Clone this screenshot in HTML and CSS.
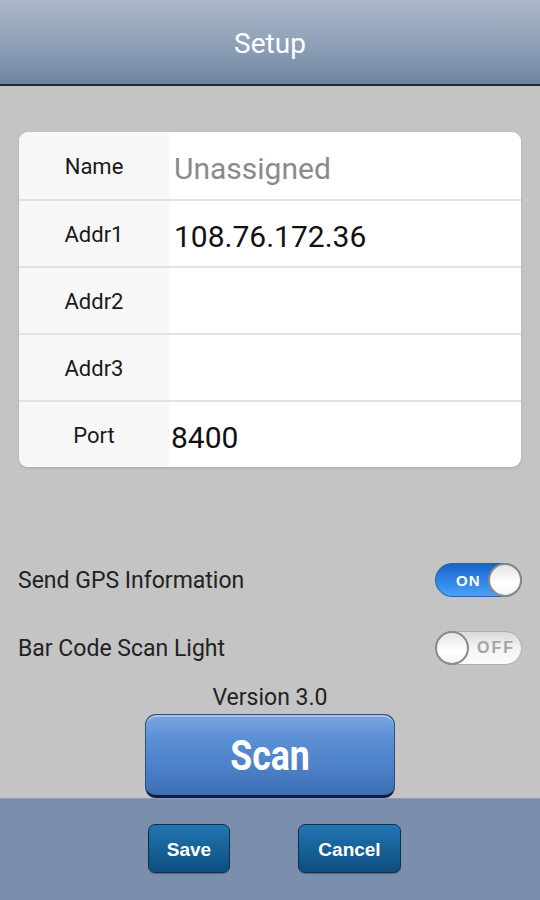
FILE: index.html
```html
<!DOCTYPE html>
<html lang="en">
<head>
    <meta charset="UTF-8">
    <meta name="viewport" content="width=device-width, initial-scale=1.0">
    <title>Setup</title>
    <link rel="stylesheet" href="styles.css">
</head>
<body>

<div class="screen">
    <header class="title-bar">
        <h1>Setup</h1>
    </header>

    <div class="main-content">
        <div class="card">
            <div class="row">
                <div class="label">Name</div>
                <div class="value placeholder">Unassigned</div>
            </div>
            <div class="row">
                <div class="label">Addr1</div>
                <div class="value">108.76.172.36</div>
            </div>
            <div class="row">
                <div class="label">Addr2</div>
                <div class="value"></div>
            </div>
            <div class="row">
                <div class="label">Addr3</div>
                <div class="value"></div>
            </div>
            <div class="row">
                <div class="label">Port</div>
                <div class="value port">8400</div>
            </div>
        </div>

        <div class="settings">
            <div class="setting">
                <span>Send GPS Information</span>
                <div class="toggle on">
                    <span class="toggle-text">ON</span>
                    <span class="knob"></span>
                </div>
            </div>
            <div class="setting">
                <span>Bar Code Scan Light</span>
                <div class="toggle off">
                    <span class="knob"></span>
                    <span class="toggle-text">OFF</span>
                </div>
            </div>
        </div>

        <p class="version">Version 3.0</p>

        <button class="scan-btn"><span>Scan</span></button>
    </div>

    <footer class="bottom-bar">
        <button class="bar-btn save">Save</button>
        <button class="bar-btn cancel">Cancel</button>
    </footer>
</div>

</body>
</html>
```

FILE: styles.css
```css
* {
    margin: 0;
    padding: 0;
    box-sizing: border-box;
}

body {
    font-family: Roboto, 'Noto Sans', sans-serif;
    background-color: #c4c4c4;
    width: 540px;
    height: 900px;
    overflow: hidden;
}

.screen {
    display: flex;
    flex-direction: column;
    height: 900px;
}

/* Title bar */
.title-bar {
    height: 86px;
    background: linear-gradient(to bottom, #abb7c9 0%, #8e9fb6 55%, #6e85a3 100%);
    border-bottom: 2px solid #262a30;
    display: flex;
    justify-content: center;
    align-items: center;
    flex-shrink: 0;
}

.title-bar h1 {
    color: #fff;
    font-size: 28px;
    font-weight: 400;
    padding-top: 2px;
}

.main-content {
    flex: 1;
    display: flex;
    flex-direction: column;
    padding-top: 46px;
}

/* Form card */
.card {
    margin: 0 19px;
    background-color: #fff;
    border-radius: 9px;
    overflow: hidden;
    box-shadow: 0 1px 3px rgba(0, 0, 0, 0.15);
}

.row {
    display: flex;
    height: 67px;
    border-top: 2px solid #e2e2e2;
}

.row:first-child {
    border-top: none;
}

.label {
    width: 150px;
    background-color: #f7f7f7;
    display: flex;
    justify-content: center;
    align-items: center;
    font-size: 22px;
    color: #1a1a1a;
    padding-top: 2px;
}

.value {
    flex: 1;
    display: flex;
    align-items: center;
    padding-left: 5px;
    padding-top: 5px;
    font-size: 30px;
    color: #111;
}

.value.placeholder {
    color: #8a8a8a;
}

.value.port {
    padding-left: 2px;
}

/* Switches */
.settings {
    margin-top: 79px;
    display: flex;
    flex-direction: column;
}

.setting {
    height: 68px;
    display: flex;
    justify-content: space-between;
    align-items: center;
    padding: 0 18px;
    font-size: 23px;
    color: #222;
}

.toggle {
    width: 87px;
    height: 34px;
    border-radius: 17px;
    display: flex;
    align-items: center;
    border: 1px solid #8c8c8c;
}

.toggle.on {
    background: linear-gradient(to bottom, #1c62c6 0%, #2f86e8 55%, #4aa2f5 100%);
    border-color: #2a5fa8;
    justify-content: space-between;
    padding-left: 20px;
}

.toggle.off {
    background: linear-gradient(to bottom, #d9d9d9 0%, #f4f4f4 50%, #fbfbfb 100%);
    border-color: #b0b0b0;
    padding-right: 6px;
    justify-content: space-between;
}

.toggle-text {
    font-family: 'Liberation Sans', Arial, sans-serif;
    font-weight: 700;
    font-size: 15px;
    letter-spacing: 1px;
}

.toggle.on .toggle-text {
    color: #fff;
}

.toggle.off .toggle-text {
    color: #a4a4a4;
    font-size: 16px;
    letter-spacing: 2px;
}

.knob {
    width: 34px;
    height: 34px;
    border-radius: 50%;
    background: linear-gradient(to bottom, #e4e4e4 0%, #ffffff 60%, #f4f4f4 100%);
    border: 2px solid #8a8a8a;
    margin: -1px;
}

.version {
    text-align: center;
    font-size: 23px;
    color: #222;
    height: 32px;
    line-height: 32px;
}

/* Scan button */
.scan-btn {
    align-self: center;
    width: 250px;
    height: 84px;
    border-radius: 11px;
    border: 1px solid #2d4f80;
    border-bottom: 3px solid #0f1f3a;
    background: linear-gradient(to bottom, #79a6e0 0%, #5b8fd4 30%, #4a7fc6 70%, #3d6eb2 100%);
    box-shadow: inset 0 2px 0 rgba(255, 255, 255, 0.35);
    color: #fff;
    font-family: Roboto, sans-serif;
    font-weight: 700;
    font-size: 43px;
    display: flex;
    justify-content: center;
    align-items: center;
    margin-bottom: -2px;
    position: relative;
    z-index: 1;
}

.scan-btn span {
    display: inline-block;
    transform: scaleX(0.83);
}

/* Bottom bar */
.bottom-bar {
    height: 102px;
    flex-shrink: 0;
    background-color: #7b8fad;
    border-top: 1px solid #8e9dba;
    display: flex;
    justify-content: center;
    align-items: flex-start;
    gap: 68px;
    padding-top: 25px;
    padding-left: 9px;
}

.bar-btn {
    height: 49px;
    border-radius: 7px;
    border: 1px solid #0d2f52;
    background: linear-gradient(to bottom, #2275b3 0%, #176298 50%, #0e4d80 100%);
    box-shadow: 0 1px 1px rgba(0, 0, 0, 0.3);
    color: #fff;
    font-family: 'Liberation Sans', Arial, sans-serif;
    font-weight: 700;
    font-size: 19px;
    padding-top: 3px;
}

.bar-btn.save {
    width: 82px;
}

.bar-btn.cancel {
    width: 103px;
}
```
